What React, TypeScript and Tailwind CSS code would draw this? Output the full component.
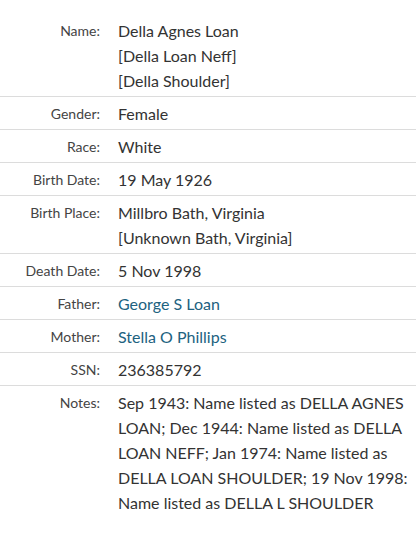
const rows: { label: string; lines: string[]; link?: boolean }[] = [
  { label: 'Name:', lines: ['Della Agnes Loan', '[Della Loan Neff]', '[Della Shoulder]'] },
  { label: 'Gender:', lines: ['Female'] },
  { label: 'Race:', lines: ['White'] },
  { label: 'Birth Date:', lines: ['19 May 1926'] },
  { label: 'Birth Place:', lines: ['Millbro Bath, Virginia', '[Unknown Bath, Virginia]'] },
  { label: 'Death Date:', lines: ['5 Nov 1998'] },
  { label: 'Father:', lines: ['George S Loan'], link: true },
  { label: 'Mother:', lines: ['Stella O Phillips'], link: true },
  { label: 'SSN:', lines: ['236385792'] },
  {
    label: 'Notes:',
    lines: [
      'Sep 1943: Name listed as DELLA AGNES LOAN; Dec 1944: Name listed as DELLA LOAN NEFF; Jan 1974: Name listed as DELLA LOAN SHOULDER; 19 Nov 1998: Name listed as DELLA L SHOULDER',
    ],
  },
];

export default function App() {
  return (
    <main className="w-[416px] h-[533px] bg-white pt-[14px] font-['Lato',sans-serif] overflow-hidden">
      <table className="w-full border-collapse">
        <tbody>
          {rows.map((row, i) => (
            <tr
              key={row.label}
              className={i < rows.length - 1 ? 'border-b border-[#dcdcdc]' : ''}
            >
              {/* label */}
              <th className="w-[118px] pr-[18px] py-[3.5px] align-top text-right font-normal text-[14px] leading-[25px] text-[#444]">
                {row.label}
              </th>
              {/* value */}
              <td className="py-[3.5px] pr-[8px] align-top text-[16px] leading-[25px] text-[#333]">
                {row.lines.map((line) => (
                  <div key={line} className={row.link ? 'text-[#21627f]' : ''}>
                    {line}
                  </div>
                ))}
              </td>
            </tr>
          ))}
        </tbody>
      </table>
    </main>
  );
}
